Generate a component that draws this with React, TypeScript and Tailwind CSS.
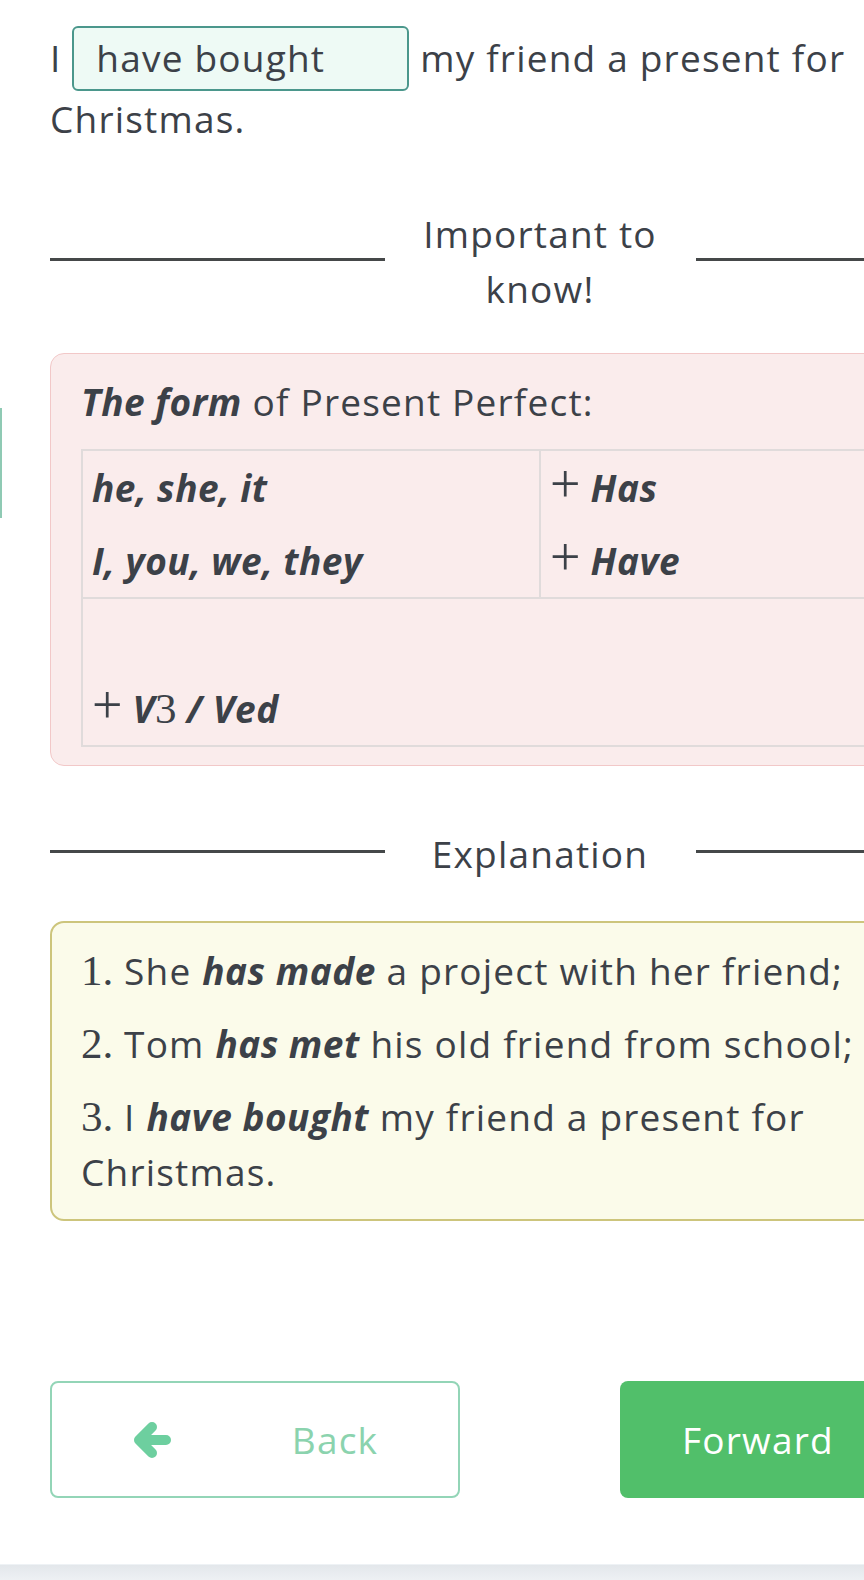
import React from "react";
import { FaArrowRight } from "react-icons/fa";

const math = "font-['Liberation_Serif',serif] text-[43px] leading-[0] font-normal not-italic tracking-normal";

function Divider({ children }: { children: React.ReactNode }) {
  return (
    <div className="flex items-center">
      <div className="mb-[4px] h-[3px] flex-1 bg-[#454849]" />
      <div className="w-[311px] text-center">{children}</div>
      <div className="mb-[4px] h-[3px] flex-1 bg-[#454849]" />
    </div>
  );
}

function Plus() {
  return (
    <span className="font-['Liberation_Serif',serif] text-[54px] leading-[0] font-normal not-italic tracking-normal">+</span>
  );
}

function BackArrow() {
  return (
    <svg width="40" height="36" viewBox="0 0 40 36" fill="none">
      <path
        d="M20 5 L7 18 L20 31 M7 18 H34"
        stroke="#6dcf9f"
        strokeWidth="10"
        strokeLinecap="round"
        strokeLinejoin="round"
      />
    </svg>
  );
}

export default function App() {
  return (
    <div className="relative w-[864px] overflow-hidden bg-white font-['Open_Sans',sans-serif] text-[37px] leading-[55px] tracking-[1.2px] text-[#3c4148]">
      {/* side tab peeking in from the left */}
      <div className="absolute left-0 top-[408px] h-[110px] w-[2px] bg-[#8fcab4]" />

      <div className="ml-[50px] w-[980px] pt-[26px]">
        <p>
          I{" "}
          <span className="inline-block h-[65px] w-[337px] rounded-[6px] border-2 border-[#4b978c] bg-[#eefaf5] pl-[22px] pt-[2px]">
            have bought
          </span>{" "}
          my friend a present for Christmas.
        </p>

        <div className="mt-[60px]">
          <Divider>Important to know!</Divider>
        </div>

        <div className="mt-[37px] rounded-[14px] border border-[#f2c8c8] bg-[#faecec] px-[30px] pt-[20px] pb-[18px]">
          <p className="mb-[20px]">
            <b className="font-bold italic tracking-[0.5px]">The form</b> of Present Perfect:
          </p>
          <table className="w-full table-fixed border-collapse font-bold italic tracking-[0.5px]">
            <tbody>
              <tr>
                <td className="border-2 border-[#e0dbdb] px-[9px] py-[9px] align-top">
                  <p className="mb-[18px]">he, she, it</p>
                  <p>I, you, we, they</p>
                </td>
                <td className="border-2 border-[#e0dbdb] px-[9px] py-[9px] align-top">
                  <p className="mb-[18px]">
                    <Plus /> Has
                  </p>
                  <p>
                    <Plus /> Have
                  </p>
                </td>
              </tr>
              <tr>
                <td colSpan={2} className="border-2 border-[#e0dbdb] px-[9px] py-[9px] align-top">
                  <p className="mb-[18px]">&nbsp;</p>
                  <p>
                    <Plus /> V<span className={math}>3</span> / Ved
                  </p>
                </td>
              </tr>
            </tbody>
          </table>
        </div>

        <div className="mt-[60px]">
          <Divider>Explanation</Divider>
        </div>

        <div className="mt-[40px] rounded-[14px] border-2 border-[#cdc57c] bg-[#fbfbea] px-[29px] pt-[20px] pb-[20px]">
          <p className="mb-[18px]">
            <span className={math}>1.</span> She <b className="font-bold italic tracking-[0.5px]">has made</b> a project with her friend;
          </p>
          <p className="mb-[18px]">
            <span className={math}>2.</span> Tom <b className="font-bold italic tracking-[0.5px]">has met</b> his old friend from school;
          </p>
          <p>
            <span className={math}>3.</span> I <b className="font-bold italic tracking-[0.5px]">have bought</b> my friend a present for Christmas.
          </p>
        </div>

        <div className="mt-[160px] flex justify-between">
          <button className="flex h-[117px] w-[410px] items-center justify-center gap-[120px] rounded-[8px] border-2 border-[#93d5b7] bg-white text-[#8bd3ae]">
            <BackArrow />
            <span>Back</span>
          </button>
          <button className="flex h-[117px] w-[410px] items-center gap-[122px] rounded-[8px] bg-[#51bf6a] pl-[62px] text-white">
            <span>Forward</span>
            <FaArrowRight size={38} />
          </button>
        </div>
      </div>

      <div className="mt-[66px] h-[17px] border-t border-[#eef2f5] bg-gradient-to-b from-[#e3e7eb] to-[#eef1f4]" />
    </div>
  );
}
